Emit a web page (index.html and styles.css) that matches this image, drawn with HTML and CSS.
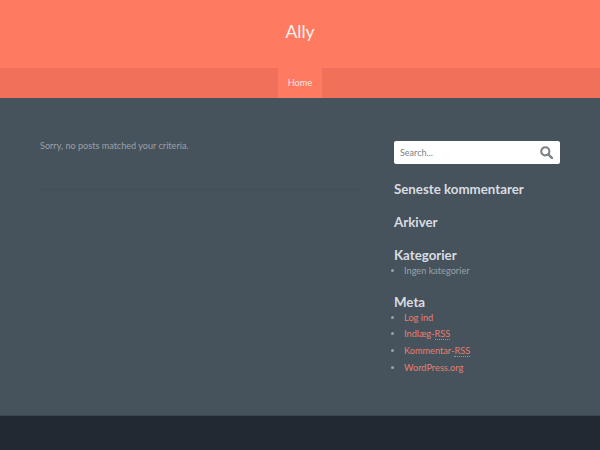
FILE: index.html
```html
<!DOCTYPE html>
<html lang="da">
<head>
<meta charset="utf-8">
<title>Ally</title>
<link rel="stylesheet" href="styles.css">
</head>
<body>
<header class="masthead">
  <h1 class="site-title">Ally</h1>
  <nav class="nav"><a class="nav-item" href="#">Home</a></nav>
</header>
<main class="content">
  <section class="primary">
    <p class="none">Sorry, no posts matched your criteria.</p>
    <div class="rule"></div>
  </section>
  <aside class="sidebar">
    <form class="search">
      <span class="search-text">Search...</span>
      <svg class="search-icon" width="13" height="13" viewBox="0 0 14 14"><circle cx="5.7" cy="5.7" r="4.4" fill="none" stroke="#7a8187" stroke-width="2.2"/><path d="M9 9L13 13" stroke="#7a8187" stroke-width="2.6" stroke-linecap="round"/></svg>
    </form>
    <h3 class="w-title">Seneste kommentarer</h3>
    <h3 class="w-title">Arkiver</h3>
    <h3 class="w-title">Kategorier</h3>
    <ul class="list"><li>Ingen kategorier</li></ul>
    <h3 class="w-title">Meta</h3>
    <ul class="list">
      <li><a href="#">Log ind</a></li>
      <li><a href="#">Indlæg-<abbr>RSS</abbr></a></li>
      <li><a href="#">Kommentar-<abbr>RSS</abbr></a></li>
      <li><a href="#">WordPress.org</a></li>
    </ul>
  </aside>
</main>
<footer class="footer"></footer>
</body>
</html>
```
FILE: styles.css
```css
* { box-sizing: border-box; }
html, body { margin: 0; padding: 0; }
body { width: 600px; height: 450px; overflow: hidden; background: #46525c; font-family: Lato, sans-serif; display: flex; flex-direction: column; }
.masthead { background: #fe7a60; height: 98px; display: flex; flex-direction: column; }
.site-title { margin: 0; height: 68px; line-height: 63px; text-align: center; color: #fdf1ee; font-size: 17.5px; font-weight: 400; }
.nav { height: 30px; background: #f1705a; display: flex; justify-content: center; }
.nav-item { background: #fe7a60; color: #fbe6e0; font-size: 9.2px; line-height: 30px; width: 44px; text-align: center; text-decoration: none; }
.content { flex: 1; display: flex; justify-content: space-between; padding: 40px 40px 0; }
.primary { width: 320px; }
.none { margin: 0; font-size: 9.1px; line-height: 15px; color: #9aa2a9; }
.rule { margin-top: 36px; height: 1px; background: #424e58; }
.sidebar { width: 166px; margin-top: 3px; }
.search { height: 23px; background: #fff; border-radius: 2px; display: flex; align-items: center; justify-content: space-between; padding: 0 7px 0 6px; }
.search-text { font-size: 9px; color: #7a8187; }
.w-title { margin: 18px 0 0; font-size: 13.3px; line-height: 15px; font-weight: 700; color: #d9dde0; }
.list { margin: 0; padding: 0 0 0 10px; font-size: 9.2px; line-height: 15px; color: #9aa2a9; }
.list li { padding-bottom: 1.7px; }
.list + .w-title { margin-top: 15px; }
.list a { color: #e87f6c; text-decoration: none; }
abbr { border-bottom: 1px dotted #8f98a0; }
.footer { height: 35px; background: #212a32; border-top: 1px solid #3a454e; }
```
